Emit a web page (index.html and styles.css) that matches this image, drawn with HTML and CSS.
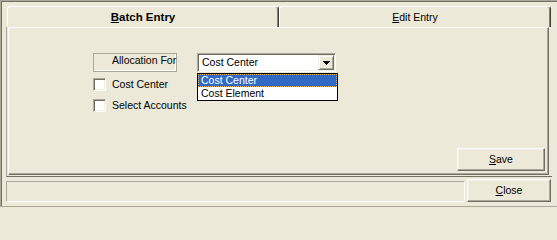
FILE: index.html
```html
<!DOCTYPE html>
<html>
<head>
<meta charset="utf-8">
<title>Allocation</title>
<link rel="stylesheet" href="styles.css">
</head>
<body>
<div class="window">
  <div class="tabs">
    <div class="tab tab-active"><span><u>B</u>atch Entry</span></div>
    <div class="tab"><span><u>E</u>dit Entry</span></div>
  </div>
  <div class="panel-frame">
    <div class="panel">
      <div class="row-alloc">
        <div class="static">Allocation For</div>
        <div class="combo">
          <div class="combo-text">Cost Center</div>
          <div class="combo-btn">
            <svg class="arrow" width="7" height="4" viewBox="0 0 7 4"><path d="M0 0h7v1h-1v1h-1v1h-1v1h-1v-1h-1v-1h-1v-1h-1z" fill="#000" shape-rendering="crispEdges"/></svg>
          </div>
          <div class="droplist">
            <div class="item item-sel">Cost Center</div>
            <div class="item">Cost Element</div>
          </div>
        </div>
      </div>
      <div class="check-row first"><span class="check"></span><span>Cost Center</span></div>
      <div class="check-row second"><span class="check"></span><span>Select Accounts</span></div>
      <div class="panel-foot"><button class="btn save"><u>S</u>ave</button></div>
    </div>
  </div>
  <div class="bottom">
    <div class="status"></div>
    <button class="btn close"><u>C</u>lose</button>
  </div>
</div>
</body>
</html>
```
FILE: styles.css
```css
html, body {
  margin: 0;
  padding: 0;
}
body {
  background: #ECE9D8;
  font-family: "Liberation Sans", Arial, sans-serif;
  font-size: 10.5px;
  color: #000;
}
.window {
  box-sizing: border-box;
  width: 557px;
  height: 207px;
  border-top: 1px solid #ACA899;
  border-left: 1px solid #ACA899;
  border-bottom: 1px solid #ACA899;
  box-shadow: inset 1px 1px 0 #716F64;
  display: flex;
  flex-direction: column;
}
.tabs {
  display: flex;
  margin-top: 5px;
  padding-left: 6px;
  height: 21px;
}
.tab {
  box-sizing: border-box;
  width: 272px;
  height: 21px;
  border-top: 1px solid #fff;
  border-left: 1px solid #fff;
  border-right: 1px solid #404040;
  border-radius: 3px 3px 0 0;
  box-shadow: inset -1px 0 0 #808080;
  display: flex;
  align-items: center;
  justify-content: center;
  line-height: 13px;
}
.tab-active span {
  font-weight: bold;
  font-size: 11.5px;
}
.panel-frame {
  box-sizing: border-box;
  margin-left: 5px;
  width: 546px;
  border-left: 1px solid #ACA899;
  border-bottom: 1px solid #716F64;
  padding-left: 1px;
  padding-bottom: 1px;
}
.panel {
  box-sizing: border-box;
  width: 541px;
  height: 148px;
  border-top: 1px solid #fff;
  border-left: 1px solid #fff;
  border-right: 1px solid #716F64;
  border-bottom: 1px solid #716F64;
  box-shadow: inset -1px -1px 0 #ACA899;
  display: flex;
  flex-direction: column;
}
.row-alloc {
  display: flex;
  margin-top: 25px;
  margin-left: 84px;
  height: 19px;
}
.static {
  box-sizing: border-box;
  width: 84px;
  height: 19px;
  border: 1px solid #ACA899;
  box-shadow: inset -1px -1px 0 #fff;
  padding-left: 18px;
  line-height: 13px;
  white-space: nowrap;
}
.combo {
  position: relative;
  box-sizing: border-box;
  width: 139px;
  height: 19px;
  margin-left: 20px;
  background: #fff;
  border: 1px solid;
  border-color: #ACA899 #fff #fff #ACA899;
  box-shadow: inset 1px 1px 0 #716F64, inset -1px -1px 0 #F1EFE2;
  display: flex;
  padding: 1px;
}
.combo-text {
  flex: 1;
  padding-left: 3px;
  line-height: 15px;
  white-space: nowrap;
}
.combo-btn {
  box-sizing: border-box;
  width: 16px;
  height: 15px;
  background: #ECE9D8;
  border: 1px solid;
  border-color: #F1EFE2 #716F64 #716F64 #F1EFE2;
  box-shadow: inset 1px 1px 0 #fff, inset -1px -1px 0 #ACA899;
  display: flex;
  align-items: center;
  justify-content: center;
}
.arrow {
  display: block;
  margin-left: 1px;
  margin-top: 1px;
}
.droplist {
  position: absolute;
  left: -1px;
  top: 19px;
  box-sizing: border-box;
  width: 141px;
  height: 28px;
  border: 1px solid #000;
  background: #fff;
  z-index: 2;
}
.item {
  height: 13px;
  line-height: 13px;
  padding-left: 3px;
  white-space: nowrap;
}
.item-sel {
  background: #316AC5;
  color: #fff;
  outline: 1px dotted #E9B85C;
  outline-offset: -1px;
}
.check-row {
  display: flex;
  align-items: center;
  margin-left: 84px;
  height: 13px;
  line-height: 13px;
}
.check-row.first {
  margin-top: 6px;
}
.check-row.second {
  margin-top: 8px;
}
.check {
  box-sizing: border-box;
  width: 13px;
  height: 13px;
  border: 1px solid;
  border-color: #ACA899 #fff #fff #ACA899;
  box-shadow: inset 1px 1px 0 #716F64, inset -1px -1px 0 #F1EFE2;
  background: #fff;
  margin-right: 6px;
}
.panel-foot {
  margin-top: auto;
  display: flex;
  justify-content: flex-end;
  padding-right: 3px;
  padding-bottom: 3px;
}
.btn {
  box-sizing: border-box;
  font: inherit;
  color: #000;
  background: #ECE9D8;
  border: 1px solid;
  border-color: #fff #716F64 #716F64 #fff;
  box-shadow: inset -1px -1px 0 #ACA899, inset 1px 1px 0 #F1EFE2;
  padding: 0;
  margin: 0;
  line-height: 13px;
}
.save {
  width: 88px;
  height: 23px;
}
.close {
  width: 84px;
  height: 23px;
}
.bottom {
  display: flex;
  align-items: flex-end;
  margin-top: 2px;
  padding-left: 5px;
  height: 23px;
}
.status {
  box-sizing: border-box;
  width: 459px;
  height: 21px;
  border: 1px solid;
  border-color: #ACA899 #fff #fff #ACA899;
  margin-right: 2px;
}
```
